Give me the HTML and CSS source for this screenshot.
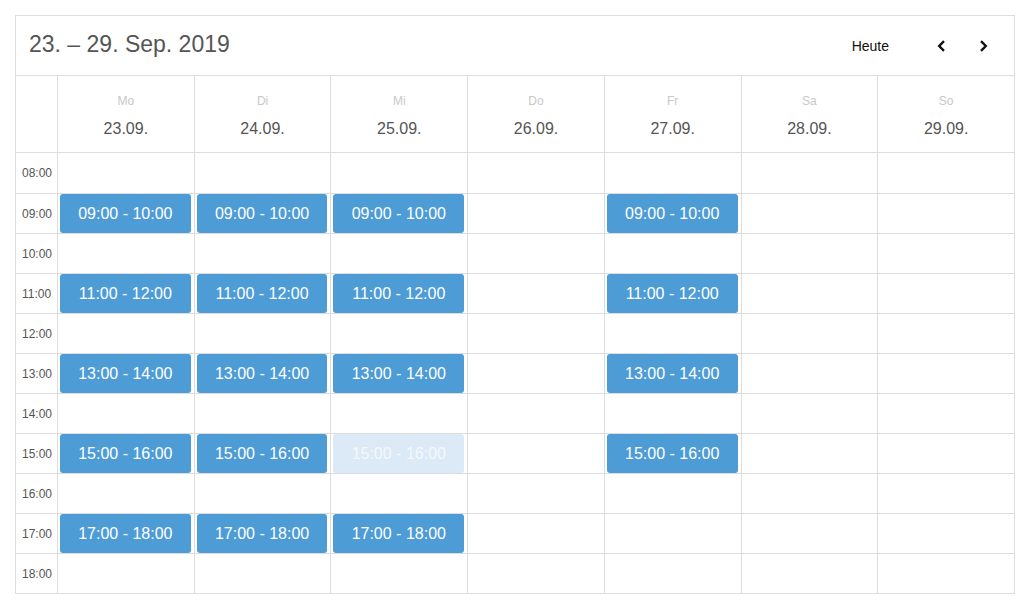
FILE: index.html
```html
<!DOCTYPE html>
<html lang="de">
<head>
<meta charset="utf-8">
<title>Kalender</title>
<link rel="stylesheet" href="styles.css">
</head>
<body>
<div class="cal">
  <div class="toolbar">
    <h1 class="title">23. – 29. Sep. 2019</h1>
    <div class="nav">
      <button class="btn-today">Heute</button>
      <button class="btn-arrow" aria-label="Zurück"><svg width="9" height="12" viewBox="0 0 9 12"><polyline points="7,1.2 2.2,6 7,10.8" fill="none" stroke="#111" stroke-width="2.4"/></svg></button>
      <button class="btn-arrow" aria-label="Weiter"><svg width="9" height="12" viewBox="0 0 9 12"><polyline points="2,1.2 6.8,6 2,10.8" fill="none" stroke="#111" stroke-width="2.4"/></svg></button>
    </div>
  </div>
  <div class="grid">
    <div class="cell head corner"></div>
    <div class="cell head day"><span class="dname">Mo</span><span class="ddate">23.09.</span></div>
    <div class="cell head day"><span class="dname">Di</span><span class="ddate">24.09.</span></div>
    <div class="cell head day"><span class="dname">Mi</span><span class="ddate">25.09.</span></div>
    <div class="cell head day"><span class="dname">Do</span><span class="ddate">26.09.</span></div>
    <div class="cell head day"><span class="dname">Fr</span><span class="ddate">27.09.</span></div>
    <div class="cell head day"><span class="dname">Sa</span><span class="ddate">28.09.</span></div>
    <div class="cell head day"><span class="dname">So</span><span class="ddate">29.09.</span></div>

    <div class="cell time">08:00</div>
    <div class="cell slot"></div><div class="cell slot"></div><div class="cell slot"></div><div class="cell slot"></div><div class="cell slot"></div><div class="cell slot"></div><div class="cell slot"></div>

    <div class="cell time">09:00</div>
    <div class="cell slot"><div class="event">09:00 - 10:00</div></div>
    <div class="cell slot"><div class="event">09:00 - 10:00</div></div>
    <div class="cell slot"><div class="event">09:00 - 10:00</div></div>
    <div class="cell slot"></div>
    <div class="cell slot"><div class="event">09:00 - 10:00</div></div>
    <div class="cell slot"></div><div class="cell slot"></div>

    <div class="cell time">10:00</div>
    <div class="cell slot"></div><div class="cell slot"></div><div class="cell slot"></div><div class="cell slot"></div><div class="cell slot"></div><div class="cell slot"></div><div class="cell slot"></div>

    <div class="cell time">11:00</div>
    <div class="cell slot"><div class="event">11:00 - 12:00</div></div>
    <div class="cell slot"><div class="event">11:00 - 12:00</div></div>
    <div class="cell slot"><div class="event">11:00 - 12:00</div></div>
    <div class="cell slot"></div>
    <div class="cell slot"><div class="event">11:00 - 12:00</div></div>
    <div class="cell slot"></div><div class="cell slot"></div>

    <div class="cell time">12:00</div>
    <div class="cell slot"></div><div class="cell slot"></div><div class="cell slot"></div><div class="cell slot"></div><div class="cell slot"></div><div class="cell slot"></div><div class="cell slot"></div>

    <div class="cell time">13:00</div>
    <div class="cell slot"><div class="event">13:00 - 14:00</div></div>
    <div class="cell slot"><div class="event">13:00 - 14:00</div></div>
    <div class="cell slot"><div class="event">13:00 - 14:00</div></div>
    <div class="cell slot"></div>
    <div class="cell slot"><div class="event">13:00 - 14:00</div></div>
    <div class="cell slot"></div><div class="cell slot"></div>

    <div class="cell time">14:00</div>
    <div class="cell slot"></div><div class="cell slot"></div><div class="cell slot"></div><div class="cell slot"></div><div class="cell slot"></div><div class="cell slot"></div><div class="cell slot"></div>

    <div class="cell time">15:00</div>
    <div class="cell slot"><div class="event">15:00 - 16:00</div></div>
    <div class="cell slot"><div class="event">15:00 - 16:00</div></div>
    <div class="cell slot"><div class="event faded">15:00 - 16:00</div></div>
    <div class="cell slot"></div>
    <div class="cell slot"><div class="event">15:00 - 16:00</div></div>
    <div class="cell slot"></div><div class="cell slot"></div>

    <div class="cell time">16:00</div>
    <div class="cell slot"></div><div class="cell slot"></div><div class="cell slot"></div><div class="cell slot"></div><div class="cell slot"></div><div class="cell slot"></div><div class="cell slot"></div>

    <div class="cell time">17:00</div>
    <div class="cell slot"><div class="event">17:00 - 18:00</div></div>
    <div class="cell slot"><div class="event">17:00 - 18:00</div></div>
    <div class="cell slot"><div class="event">17:00 - 18:00</div></div>
    <div class="cell slot"></div>
    <div class="cell slot"></div>
    <div class="cell slot"></div><div class="cell slot"></div>

    <div class="cell time">18:00</div>
    <div class="cell slot"></div><div class="cell slot"></div><div class="cell slot"></div><div class="cell slot"></div><div class="cell slot"></div><div class="cell slot"></div><div class="cell slot"></div>
  </div>
</div>
</body>
</html>
```
FILE: styles.css
```css
* { box-sizing: border-box; }
html, body { margin: 0; padding: 0; background: #fff; }
body {
  padding: 15px 0 0 15px;
  font-family: "Liberation Sans", Arial, Helvetica, sans-serif;
  color: #555;
}
.cal {
  width: 1000px;
  border: 1px solid #ddd;
  background: #fff;
}
.toolbar {
  height: 59px;
  display: flex;
  align-items: center;
  justify-content: space-between;
  padding: 0 13px 0 13px;
}
.title {
  margin: 0;
  font-size: 23px;
  font-weight: normal;
  color: #555;
  line-height: 1;
  position: relative;
  top: -1px;
}
.nav {
  display: flex;
  align-items: center;
}
.nav button {
  background: none;
  border: 0;
  padding: 0;
  font-family: inherit;
  color: #111;
  cursor: pointer;
  height: 36px;
  display: flex;
  align-items: center;
  justify-content: center;
}
.btn-today {
  font-size: 14px;
  padding: 0 12px !important;
  margin-right: 22px;
}
.btn-arrow {
  width: 36px;
}
.btn-arrow + .btn-arrow { margin-left: 6px; }

.grid {
  display: grid;
  grid-template-columns: 41px repeat(7, 1fr);
  grid-template-rows: 77px 41px repeat(10, 40px);
}
.cell {
  border-top: 1px solid #ddd;
  border-left: 1px solid #ddd;
  min-width: 0;
}
.cell.corner, .cell.time { border-left: 0; }
.day {
  display: flex;
  flex-direction: column;
  align-items: center;
  padding-top: 18px;
}
.dname {
  font-size: 12px;
  line-height: 14px;
  color: #c8c8c8;
}
.ddate {
  margin-top: 11px;
  font-size: 16px;
  line-height: 20px;
  color: #555;
}
.time {
  display: flex;
  align-items: center;
  padding-left: 6px;
  font-size: 12px;
  color: #555;
}
.slot {
  display: flex;
}
.event {
  flex: 1;
  margin: 0 3px 0 2px;
  background: #4e9cd6;
  border-radius: 3px;
  color: #fff;
  font-size: 16px;
  display: flex;
  align-items: center;
  justify-content: center;
  white-space: nowrap;
}
.event.faded {
  background: #dce9f6;
  color: #f4f8fc;
}
```
